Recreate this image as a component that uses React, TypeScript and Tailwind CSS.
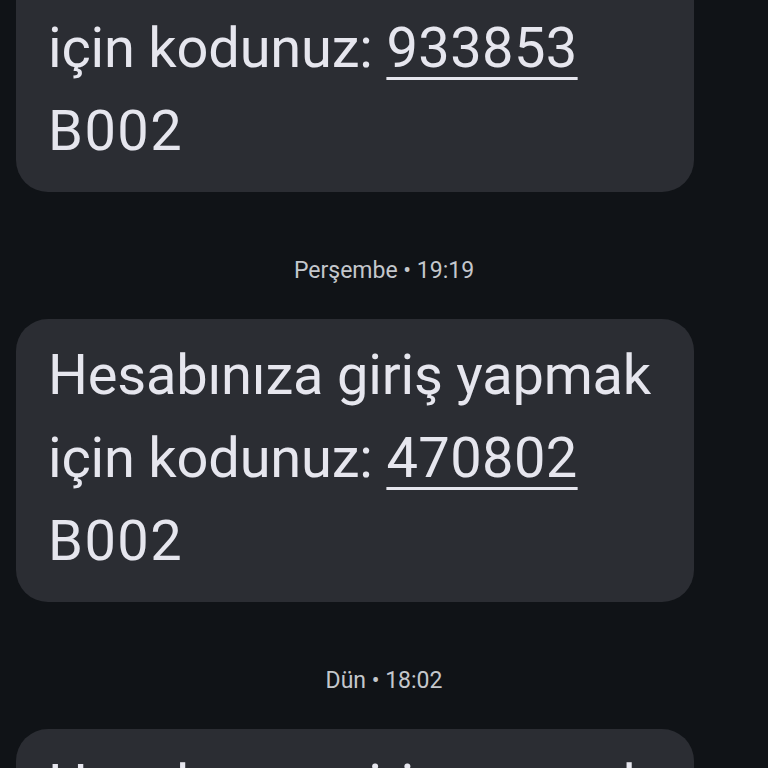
import React from 'react';

type Msg = {
  code: string;
  stamp?: string;
};

// Messages in order; the first is scrolled partly out of view
const messages: Msg[] = [
  { code: '933853' },
  { code: '470802', stamp: 'Perşembe • 19:19' },
  { code: '', stamp: 'Dün • 18:02' },
];

const Bubble: React.FC<{ code: string }> = ({ code }) => (
  <div className="ml-4 w-[678px] rounded-[32px] bg-[#2b2d33] px-8 pt-[15px] pb-[19px] text-[56px] leading-[83px] tracking-[-0.2px] text-[#e6e6ee]">
    <div>Hesabınıza giriş yapmak</div>
    <div>
      için kodunuz:{' '}
      <span className="tracking-[0.4px] underline decoration-[3px] underline-offset-[10px]">{code}</span>
    </div>
    <div className="tracking-[1.5px]">B002</div>
  </div>
);

const App: React.FC = () => {
  return (
    <div
      className="h-[768px] w-[768px] overflow-hidden bg-[#101317]"
      style={{ fontFamily: 'Roboto, "Noto Sans", sans-serif' }}
    >
      <div className="-mt-[91px] flex flex-col">
        {messages.map((m, i) => (
          <React.Fragment key={i}>
            {m.stamp && (
              <div className="flex h-[127px] items-center justify-center pt-[32px] text-[23px] text-[#c4c7cc]">
                {m.stamp}
              </div>
            )}
            <Bubble code={m.code || '000000'} />
          </React.Fragment>
        ))}
      </div>
    </div>
  );
};

export default App;
